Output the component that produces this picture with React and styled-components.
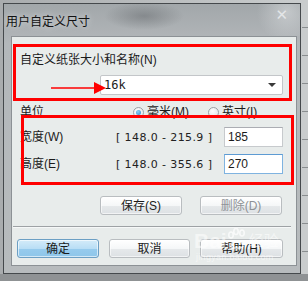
import React from "react";
import styled, { createGlobalStyle } from "styled-components";

const GlobalStyle = createGlobalStyle`
  html, body {
    margin: 0;
    padding: 0;
    background: #b9bcbe;
  }
  body {
    font-family: "Liberation Sans", "Noto Sans CJK SC", sans-serif;
    font-size: 12px;
    color: #1b1b1b;
  }
`;

const Screen = styled.div`
  width: 308px;
  height: 281px;
  box-sizing: border-box;
  padding: 3px 0 0 3px;
  overflow: hidden;
  position: relative;
  background:
    linear-gradient(to bottom, transparent 274px, #8f9294 274px),
    linear-gradient(to right, #a9acae 0, #c9cccd 300px);
`;

const DesktopLines = styled.div`
  position: absolute;
  top: 0;
  right: 0;
  width: 6px;
  height: 274px;
  background: repeating-linear-gradient(
    to bottom,
    transparent 0,
    transparent 27px,
    #5f6366 27px,
    #5f6366 28px
  );
  opacity: 0.6;
`;

const Window = styled.div`
  width: 298px;
  height: 271px;
  box-sizing: border-box;
  border: 1px solid #45494c;
  background: linear-gradient(to bottom, #a2a7aa 0, #b3b7ba 40px, #b7bbbd 100%);
  display: flex;
  flex-direction: column;
  position: relative;
`;

const TitleBar = styled.div`
  height: 32px;
  display: flex;
  align-items: center;
  padding-left: 2px;
  position: relative;
  background:
    radial-gradient(ellipse 40px 14px at 140px 12px, rgba(70, 74, 78, 0.35), transparent),
    radial-gradient(circle 30px at 283px 8px, rgba(220, 223, 225, 0.55), transparent);
`;

const Title = styled.span`
  font-size: 12px;
  line-height: 16px;
  color: #111;
  text-shadow: 0 0 6px rgba(235, 238, 240, 0.9);
  margin-top: 3px;
`;

const CloseGlyph = styled.span`
  position: absolute;
  right: 12px;
  top: 2px;
  font-family: "DejaVu Sans", sans-serif;
  font-size: 15px;
  color: rgba(240, 242, 244, 0.75);
`;

const Client = styled.div`
  margin: 0 3px 7px 7px;
  flex: 1;
  box-sizing: border-box;
  border: 1px solid #8c9195;
  background: #e8eceb;
  padding: 0 8px;
  display: flex;
  flex-direction: column;
  position: relative;
`;

const Label = styled.div`
  line-height: 16px;
  height: 16px;
  white-space: nowrap;
`;

const GroupLabel = styled(Label)`
  margin-top: 15px;
`;

const Combo = styled.div`
  margin: 7px 0 0 80px;
  width: 183px;
  height: 20px;
  box-sizing: border-box;
  border: 1px solid #c3c6c9;
  border-radius: 2px;
  background: #fff;
  display: flex;
  align-items: center;
  justify-content: space-between;
  padding: 0 6px 0 3px;
  font-family: "DejaVu Sans Mono", monospace;
  font-size: 12px;
`;

const ComboArrow = styled.span`
  width: 0;
  height: 0;
  border-left: 4px solid transparent;
  border-right: 4px solid transparent;
  border-top: 4px solid #3a3a3a;
`;

const UnitRow = styled.div`
  margin-top: 9px;
  height: 16px;
  display: flex;
  align-items: center;
`;

const UnitLabel = styled(Label)`
  width: 113px;
`;

const RadioItem = styled.label`
  display: flex;
  align-items: center;
  gap: 3px;
  width: 75px;
  line-height: 16px;
`;

const RadioCircle = styled.span`
  width: 11px;
  height: 11px;
  box-sizing: border-box;
  border-radius: 50%;
  border: 1px solid #9aa0a5;
  background: radial-gradient(circle at 40% 35%, #ffffff, #dde1e4);
  display: flex;
  align-items: center;
  justify-content: center;
  &::after {
    content: "";
    width: 5px;
    height: 5px;
    border-radius: 50%;
    background: ${(p) => (p.$checked ? "radial-gradient(circle at 40% 35%, #8fd0f5, #2a87c8)" : "transparent")};
  }
`;

const SizeGrid = styled.div`
  margin-top: 7px;
  display: grid;
  grid-template-columns: 96px 108px 59px;
  grid-auto-rows: 20px;
  row-gap: 7px;
  align-items: center;
`;

const Range = styled.span`
  font-family: "DejaVu Sans", sans-serif;
  font-size: 11px;
  letter-spacing: 0.4px;
  white-space: pre;
  color: #222;
`;

const Field = styled.div`
  height: 20px;
  box-sizing: border-box;
  border: 1px solid ${(p) => (p.$focused ? "#7fb3e0" : "#c7cacd")};
  border-top-color: ${(p) => (p.$focused ? "#5d9bd3" : "#abadb3")};
  background: #fff;
  display: flex;
  align-items: center;
  padding-left: 3px;
  font-size: 12px;
`;

const ButtonRow = styled.div`
  display: grid;
  grid-template-columns: ${(p) => p.$cols};
  column-gap: ${(p) => p.$gap}px;
  margin-top: ${(p) => p.$top}px;
  margin-left: ${(p) => p.$left}px;
`;

const Button = styled.div`
  height: 19px;
  box-sizing: border-box;
  border: 1px solid ${(p) => (p.$primary ? "#6c9fc4" : "#b9bdc0")};
  border-radius: 3px;
  background: ${(p) =>
    p.$primary
      ? "linear-gradient(to bottom, #d4ebf9 0, #b9def5 50%, #96cbed 51%, #8ec6ea 100%)"
      : "linear-gradient(to bottom, #ffffff 0, #f5f7f8 50%, #e6e9eb 51%, #dde1e4 100%)"};
  box-shadow: inset 0 0 0 1px rgba(255, 255, 255, 0.6);
  display: flex;
  align-items: center;
  justify-content: center;
  line-height: 16px;
  color: ${(p) => (p.$disabled ? "#8e9296" : "#1b1b1b")};
`;

const Separator = styled.div`
  margin: 11px 0 0 -7px;
  width: 278px;
  height: 1px;
  background: #9ea2a5;
  border-bottom: 1px solid #f6f8f8;
`;

const Highlight = styled.div`
  position: absolute;
  left: ${(p) => p.$x}px;
  top: ${(p) => p.$y}px;
  width: ${(p) => p.$w}px;
  height: ${(p) => p.$h}px;
  box-sizing: border-box;
  border: 3px solid #ff0000;
  pointer-events: none;
`;

const ArrowMark = styled.svg`
  position: absolute;
  left: 38px;
  top: 45px;
`;

const Watermark = styled.div`
  position: absolute;
  left: 182px;
  top: 191px;
  color: rgba(255, 255, 255, 0.55);
  font-family: "Liberation Sans", "Noto Sans CJK SC", sans-serif;
  pointer-events: none;
  display: flex;
  flex-direction: column;
`;

const WmMain = styled.div`
  font-size: 21px;
  font-weight: bold;
  line-height: 22px;
  display: flex;
  align-items: flex-end;
  & small {
    font-size: 15px;
    font-weight: normal;
    margin-left: 2px;
  }
`;

const WmSub = styled.div`
  font-size: 9px;
  line-height: 11px;
  margin-left: 2px;
  letter-spacing: 0.3px;
`;

const Paw = () => (
  <svg width="20" height="22" viewBox="0 0 20 22" style={{ marginBottom: 2 }}>
    <g fill="none" stroke="rgba(255,255,255,0.7)" strokeWidth="1.6">
      <ellipse cx="4" cy="7" rx="2.2" ry="3" />
      <ellipse cx="9" cy="3.5" rx="2.2" ry="3" />
      <ellipse cx="15" cy="5" rx="2.2" ry="3" />
      <path d="M4 18 C4 11, 15 11, 16 18 C16 21, 4 21, 4 18 Z" />
    </g>
  </svg>
);

export default function App() {
  return (
    <>
      <GlobalStyle />
      <Screen>
        <DesktopLines />
        <Window>
          <TitleBar>
            <Title>用户自定义尺寸</Title>
            <CloseGlyph>✕</CloseGlyph>
          </TitleBar>
          <Client>
            <GroupLabel>自定义纸张大小和名称(N)</GroupLabel>
            <Combo>
              <span>16k</span>
              <ComboArrow />
            </Combo>

            <UnitRow>
              <UnitLabel>单位</UnitLabel>
              <RadioItem>
                <RadioCircle $checked />
                毫米(M)
              </RadioItem>
              <RadioItem>
                <RadioCircle />
                英寸(I)
              </RadioItem>
            </UnitRow>

            <SizeGrid>
              <Label>宽度(W)</Label>
              <Range>[ 148.0 - 215.9 ]</Range>
              <Field>185</Field>
              <Label>高度(E)</Label>
              <Range>[ 148.0 - 355.6 ]</Range>
              <Field $focused>270</Field>
            </SizeGrid>

            <ButtonRow $cols="82px 82px" $gap={18} $top={22} $left={80}>
              <Button>保存(S)</Button>
              <Button $disabled>删除(D)</Button>
            </ButtonRow>

            <Separator />

            <ButtonRow $cols="82px 81px 83px" $gap={10} $top={11} $left={-3}>
              <Button $primary>确定</Button>
              <Button>取消</Button>
              <Button>帮助(H)</Button>
            </ButtonRow>

            <Highlight $x={1} $y={7} $w={279} $h={57} />
            <Highlight $x={9} $y={78} $w={273} $h={70} />
            <ArrowMark width="56" height="12" viewBox="0 0 56 12">
              <line x1="1" y1="6" x2="46" y2="6" stroke="#ff0000" strokeWidth="1.5" />
              <polygon points="44,0 56,6 44,12" fill="#ff0000" />
            </ArrowMark>

            <Watermark>
              <WmMain>
                Bai
                <Paw />
                <small>经验</small>
              </WmMain>
              <WmSub>jingyan.baidu.com</WmSub>
            </Watermark>
          </Client>
        </Window>
      </Screen>
    </>
  );
}
